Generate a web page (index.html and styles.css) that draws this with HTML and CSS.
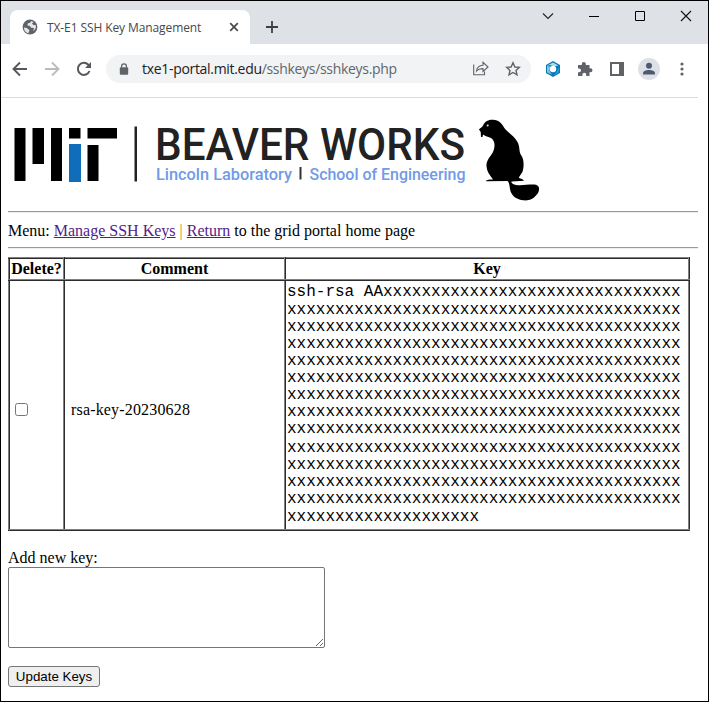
FILE: index.html
```html
<!DOCTYPE html>
<html lang="en">
<head>
<meta charset="utf-8">
<title>TX-E1 SSH Key Management</title>
<link rel="stylesheet" href="styles.css">
</head>
<body>
<div class="window">
  <div class="tabstrip">
    <div class="tab">
      <svg class="globe" width="16" height="16" viewBox="0 0 16 16"><circle cx="8" cy="8" r="7.4" fill="#5f6368"/><path d="M2 8.5 4.8 9 7.5 11.2 6.5 13.8 7 14.2C4 14 1.8 11.500 2 8.500ZM9.500 2 8 3.800 5.800 4.500 5.500 6.500 8 7 9 8.800 12 9 11.200 12.200C13.500 10.500 14.300 8.500 13.900 6.300L11.500 6 10 4.500 11.500 3Z" fill="#e4e6e9"/></svg>
      <span class="tab-title">TX-E1 SSH Key Management</span>
      <svg class="tab-close" width="10" height="10" viewBox="0 0 10 10"><path d="M1.200 1.200 8.800 8.800M8.800 1.200 1.200 8.800" stroke="#45494d" stroke-width="1.700"/></svg>
    </div>
    <svg class="newtab" width="12" height="12" viewBox="0 0 12 12"><path d="M6 0V12M0 6H12" stroke="#3c4043" stroke-width="1.800"/></svg>
    <div class="controls">
      <svg width="12" height="12" viewBox="0 0 12 12"><path d="M1 3.500 6 8.500 11 3.500" fill="none" stroke="#222" stroke-width="1.100"/></svg>
      <svg width="12" height="12" viewBox="0 0 12 12"><path d="M1 6.500H11" stroke="#000"/></svg>
      <svg width="12" height="12" viewBox="0 0 12 12"><path d="M1.500 1.500H10.500V10.500H1.500Z" fill="none" stroke="#000"/></svg>
      <svg width="12" height="12" viewBox="0 0 12 12"><path d="M1 1 11 11M11 1 1 11" stroke="#111" stroke-width="1.100"/></svg>
    </div>
  </div>
  <div class="toolbar">
    <svg width="16" height="16" viewBox="0 0 16 16"><path d="M15 8H2M8 1.500 1.500 8 8 14.500" fill="none" stroke="#55595e" stroke-width="1.900"/></svg>
    <svg width="16" height="16" viewBox="0 0 16 16"><path d="M1 8H14M8 1.500 14.500 8 8 14.500" fill="none" stroke="#babcbe" stroke-width="1.900"/></svg>
    <svg width="16" height="16" viewBox="0 0 16 16"><path d="M13.500 10A6 6 0 1 1 12.300 3.800L14 5.500" fill="none" stroke="#55595e" stroke-width="2"/><path d="M15 1V7H9Z" fill="#55595e"/></svg>
    <div class="address">
      <svg width="10" height="12" viewBox="0 0 10 12"><rect x=".8" y="4.300" width="8.400" height="7.400" rx="1" fill="#5f6368"/><path d="M2.600 4.500V3.200a2.400 2.400 0 0 1 4.800 0V4.500" fill="none" stroke="#5f6368" stroke-width="1.300"/></svg>
      <span class="url"><b>txe1-portal.mit.edu</b>/sshkeys/sshkeys.php</span>
      <svg class="share" width="16" height="15" viewBox="0 0 16 15"><path d="M.7 3.500V13.800H11.500V10.500M3.500 10C4 6 6.500 4.400 10 4.300V1.300L15 6 10 10.500V7.600C7 7.500 5 8.200 3.500 10Z" fill="none" stroke="#5f6368" stroke-width="1.100"/></svg>
      <svg class="star" width="16" height="16" viewBox="0 0 16 16"><path d="M8 1.800 9.900 6 14.300 6.400 11 9.400 12 13.900 8 11.500 4 13.900 5 9.400 1.700 6.400 6.100 6Z" fill="none" stroke="#5f6368" stroke-width="1.400"/></svg>
    </div>
    <div class="actions">
      <svg width="16" height="16" viewBox="0 0 16 16"><path d="M8 0 15 4V12L8 16 1 12V4Z" fill="#0b76b0"/><path d="M8 1.400 13.400 4.600 9 5.500 5 4 2.200 5V4.600Z" fill="#a8daf2"/><path d="M2 5 5 5.500 4.500 10 7 13.800 2 11.200Z" fill="#7cc5e8"/><path d="M14 5.500V11.400L8.500 14.500 12 10Z" fill="#1b9cdb"/><circle cx="8" cy="8" r="3.200" fill="#fff"/></svg>
      <svg width="16" height="16" viewBox="0 0 16 16"><path d="M1 4H4.800V3A2 2 0 0 1 8.800 3V4H12.500V7.200H13.500A2 2 0 0 1 13.500 11.200H12.500V15H9.200V13.600A1.900 1.900 0 0 0 5.400 13.600V15H1V11.200H2.200A1.800 1.800 0 0 0 2.200 7.600H1Z" fill="#5f6368"/></svg>
      <svg width="16" height="16" viewBox="0 0 16 16"><path fill-rule="evenodd" d="M1 1H15V15H1ZM3 3V13H10V3Z" fill="#5f6368"/></svg>
      <svg width="22" height="22" viewBox="0 0 22 22"><circle cx="11" cy="11" r="11" fill="#dde0e6"/><circle cx="11" cy="7.700" r="3" fill="#4e5a70"/><path d="M5 16.500V15.200C5 13.200 8 12 11 12S17 13.200 17 15.200V16.500Z" fill="#4e5a70"/></svg>
      <svg class="more" width="4" height="14" viewBox="0 0 4 14" fill="#5f6368"><circle cx="2" cy="2" r="1.600"/><circle cx="2" cy="7" r="1.600"/><circle cx="2" cy="12" r="1.600"/></svg>
    </div>
  </div>
  <div class="page">
    <svg class="logo" width="540" height="92" viewBox="8 112 540 92">
      <g fill="#000"><path d="M14.500 128H25.500V181H14.500ZM32.500 128H44V164H32.500ZM51 128H62V181H51ZM69 128H80.500V138.500H69ZM87.500 128H117V138.500H87.500ZM87.500 145H98.500V181H87.500Z"/><path d="M134.500 126.500H137V181.500H134.500Z" fill="#222"/></g>
      <path d="M69 144H81V182H69Z" fill="#0f6db9"/>
      <g class="logo-text">
        <text x="155" y="160" class="logo-name" textLength="310" lengthAdjust="spacingAndGlyphs">BEAVER WORKS</text>
        <text x="156" y="179.500" class="logo-sub" textLength="136" lengthAdjust="spacingAndGlyphs">Lincoln Laboratory</text>
        <text x="309.500" y="179.500" class="logo-sub" textLength="156" lengthAdjust="spacingAndGlyphs">School of Engineering</text>
      </g>
      <path d="M299.500 167H301.500V179.500H299.500Z" fill="#333"/>
      <path d="M479 129.500C480 128 482 127.500 483 125.500C485 121 489 119.500 493 119.700C499 120 502 123.500 504 127.500C507 132 515 136 518 143C520 148 519 152 521 155C524 159 524 165 523 170C522 174 519 176 519 178C521 178.800 523 179.200 524 180.700L511.500 181.500C511 183 513 184.500 516 185C522 186 530 184 536 184.800C540 186 539.500 190 538 193C534 199 529 201 523 200.300C515 199 511 195 510 189C509.500 185 509 182 507.500 181L486 181.300C486 180 488 179.500 493 179.500C491 176 487 173 486.500 166C486 161 490 157 493 152C495 147 495 143 493 140C491 136.500 486 137 483 134.500L482.500 137H481L480.700 132Z" fill="#000"/><circle cx="487.700" cy="125.500" r="1" fill="#ddd"/>
    </svg>
    <hr>
    <div class="menu">Menu: <a href="#">Manage SSH Keys</a> <span class="sep">|</span> <a href="#">Return</a> to the grid portal home page</div>
    <hr>
    <table>
      <colgroup><col class="c1"><col class="c2"><col class="c3"></colgroup>
      <tr><th>Delete?</th><th>Comment</th><th>Key</th></tr>
      <tr class="keyrow">
        <td><input type="checkbox"></td>
        <td class="comment">rsa-key-20230628</td>
        <td class="key"><p class="tall">ssh-rsa AAxxxxxxxxxxxxxxxxxxxxxxxxxxxxxxx</p><p>xxxxxxxxxxxxxxxxxxxxxxxxxxxxxxxxxxxxxxxxx</p><p>xxxxxxxxxxxxxxxxxxxxxxxxxxxxxxxxxxxxxxxxx</p><p>xxxxxxxxxxxxxxxxxxxxxxxxxxxxxxxxxxxxxxxxx</p><p>xxxxxxxxxxxxxxxxxxxxxxxxxxxxxxxxxxxxxxxxx</p><p>xxxxxxxxxxxxxxxxxxxxxxxxxxxxxxxxxxxxxxxxx</p><p>xxxxxxxxxxxxxxxxxxxxxxxxxxxxxxxxxxxxxxxxx</p><p>xxxxxxxxxxxxxxxxxxxxxxxxxxxxxxxxxxxxxxxxx</p><p class="gap">xxxxxxxxxxxxxxxxxxxxxxxxxxxxxxxxxxxxxxxxx</p><p>xxxxxxxxxxxxxxxxxxxxxxxxxxxxxxxxxxxxxxxxx</p><p>xxxxxxxxxxxxxxxxxxxxxxxxxxxxxxxxxxxxxxxxx</p><p>xxxxxxxxxxxxxxxxxxxxxxxxxxxxxxxxxxxxxxxxx</p><p class="tall">xxxxxxxxxxxxxxxxxxxxxxxxxxxxxxxxxxxxxxxxx</p><p>xxxxxxxxxxxxxxxxxxxx</p></td>
      </tr>
    </table>
    <div class="add">Add new key:</div>
    <textarea></textarea>
    <button type="button">Update Keys</button>
  </div>
</div>
</body>
</html>
```
FILE: styles.css
```css
* { box-sizing: border-box; }
body { margin: 0; background: #fff; }
svg { display: block; flex: none; }
.window { width: 709px; height: 702px; border: 1px solid #000; overflow: hidden; background: #fff; font: 16px "Liberation Serif", serif; color: #000; }

.tabstrip { height: 43px; background: #dee1e6; display: flex; padding: 9px 16px 0 9px; }
.tab { width: 240px; background: #fff; border-radius: 8px 8px 0 0; display: flex; align-items: center; padding: 0 11px 0 12px; }
.tab-title { font: 12px "Open Sans", sans-serif; color: #45494d; margin-left: 9px; white-space: nowrap; letter-spacing: -0.1px; }
.tab-close { margin-left: auto; }
.newtab { margin: 11px 0 0 16px; }
.controls { margin-left: auto; display: flex; gap: 34px; }

.toolbar { height: 54px; width: 697px; border-bottom: 1px solid #d9dbde; display: flex; align-items: center; padding: 0 12px 4px 11px; gap: 16px; }
.address { width: 425px; height: 28px; margin-left: -2px; border-radius: 14px; background: #f1f3f4; display: flex; align-items: center; padding: 0 10px 0 13px; }
.url { margin-left: 13px; font: 14px "Open Sans", sans-serif; color: #62666b; white-space: nowrap; letter-spacing: -0.31px; }
.url b { font-weight: 400; color: #202124; }
.share { margin-left: auto; }
.star { margin-left: 16px; }
.actions { display: flex; align-items: center; gap: 16px; margin-left: -2px; }
.actions .more { margin-left: 4px; }
.actions svg:nth-child(4) { margin-left: -3px; }

.page { width: 705px; padding: 14px 8px 0 7px; }
.logo { margin-bottom: 7px; }
.logo-text { font-family: Roboto, sans-serif; font-weight: 500; }
.logo-name { font-size: 45px; fill: #222; }
.logo-sub { font-size: 17px; fill: #6f9be8; }
hr { margin: 0; height: 2px; border: 0; border-top: 1px solid #9a9a9a; border-bottom: 1px solid #eee; }
.menu { height: 34px; line-height: 35px; }
a { color: #551a8b; }
.sep { color: #d98a2b; }

table { margin-top: 8px; width: 682px; table-layout: fixed; border-collapse: collapse; }
.c1 { width: 55px; }
.c2 { width: 221px; }
th, td { border: 2px ridge #808080; padding: 0; }
th { height: 22px; line-height: 18px; }
.keyrow { height: 250px; }
input { display: block; width: 13px; height: 13px; margin: 8px 0 0 5px; }
.comment { padding: 10px 0 0 6px; letter-spacing: 0.17px; }
.key { padding: 3px 0 0 1px; vertical-align: top; font: 16px "Liberation Mono", monospace; white-space: nowrap; }
.key p { margin: 0; height: 17px; line-height: 17px; }
.key .tall { height: 18px; }
.key .gap { height: 19px; }

.add { margin-top: 18px; height: 18px; line-height: 18px; }
textarea { display: block; width: 317px; height: 81px; border: 1px solid #767676; border-radius: 2px; }
button { display: block; width: 92px; height: 21px; margin-top: 18px; padding: 0; border: 1px solid #767676; border-radius: 3px; background: #efefef; font: 13.33px "Liberation Sans", sans-serif; color: #000; }
```
